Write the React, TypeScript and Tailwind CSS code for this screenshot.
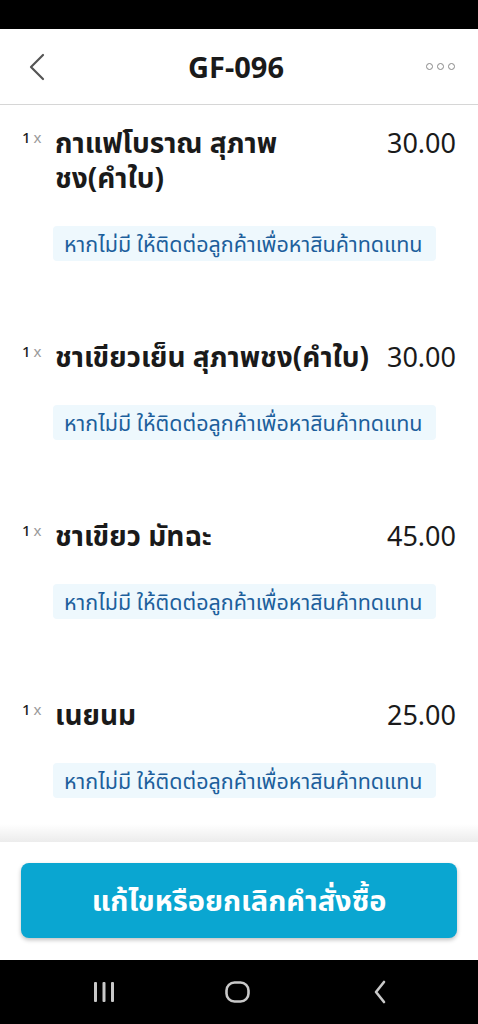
import React from 'react';

const items = [
  { qty: 1, name: 'กาแฟโบราณ สุภาพ\nชง(คำใบ)', price: '30.00' },
  { qty: 1, name: 'ชาเขียวเย็น สุภาพชง(คำใบ)', price: '30.00' },
  { qty: 1, name: 'ชาเขียว มัทฉะ', price: '45.00' },
  { qty: 1, name: 'เนยนม', price: '25.00' },
];

const font = { fontFamily: '"Noto Sans", "Noto Sans Thai", sans-serif' };

function OrderItem({ qty, name, price }: { qty: number; name: string; price: string }) {
  return (
    <div className="pl-[22px] pr-[22px] pt-[20px] pb-[58px]">
      <div className="flex items-start">
        <div className="w-[33px] shrink-0 pt-[2px] text-[15px] leading-[20px]">
          <span className="font-medium text-[#222]">{qty}</span>
          <span className="ml-[3px] text-[#999]">x</span>
        </div>
        <div className="flex-1 whitespace-pre-line text-[28px] font-bold leading-[35px] text-[#1a1a1a]">{name}</div>
        <div className="shrink-0 pl-[6px] text-[27px] leading-[35px] text-[#1a1a1a]">{price}</div>
      </div>
      <div className="mt-[31px] ml-[31px] mr-[20px] rounded-[4px] bg-[#eef8fd] px-[11px] py-[3px] text-[21.5px] leading-[29px] text-[#1d5f9c]">
        หากไม่มี ให้ติดต่อลูกค้าเพื่อหาสินค้าทดแทน
      </div>
    </div>
  );
}

export default function App() {
  return (
    <div className="flex h-[1024px] w-[478px] flex-col overflow-hidden bg-white" style={font}>
      <div className="h-[29px] shrink-0 bg-black" />
      <header className="flex h-[76px] shrink-0 items-center justify-between border-b border-[#d6d6d6] pl-[28px] pr-[23px]">
        <svg width="18" height="28" viewBox="0 0 18 28" fill="none" stroke="#555" strokeWidth="2.2" strokeLinecap="round" strokeLinejoin="round">
          <path d="M15 2 L3 14 L15 26" />
        </svg>
        <h1 className="text-[29px] font-bold text-[#1a1a1a]">GF-096</h1>
        <div className="flex gap-[4px]">
          <span className="h-[7px] w-[7px] rounded-full border-[1.5px] border-[#888]" />
          <span className="h-[7px] w-[7px] rounded-full border-[1.5px] border-[#888]" />
          <span className="h-[7px] w-[7px] rounded-full border-[1.5px] border-[#888]" />
        </div>
      </header>
      <main className="relative flex-1 overflow-hidden">
        {items.map((it, i) => (
          <OrderItem key={i} {...it} />
        ))}
        <div className="absolute bottom-0 left-0 right-0 h-[18px] bg-gradient-to-b from-transparent to-[#ececec]" />
      </main>
      <footer className="flex h-[118px] shrink-0 items-center px-[21px] pb-[2px]">
        <button className="h-[75px] w-full rounded-[8px] bg-[#0aa6d1] text-[29px] font-bold text-white shadow-[0_2px_4px_rgba(0,0,0,0.25)]">
          แก้ไขหรือยกเลิกคำสั่งซื้อ
        </button>
      </footer>
      <nav className="flex h-[64px] shrink-0 items-center bg-black pl-[84px]">
        <div className="flex w-[40px] justify-center">
          <svg width="22" height="20" viewBox="0 0 22 20" fill="#c8c8c8">
            <rect x="1" y="0" width="3" height="20" rx="1" />
            <rect x="9.5" y="0" width="3" height="20" rx="1" />
            <rect x="18" y="0" width="3" height="20" rx="1" />
          </svg>
        </div>
        <div className="ml-[93px] flex w-[40px] justify-center">
          <svg width="25" height="22" viewBox="0 0 25 22" fill="none" stroke="#c8c8c8" strokeWidth="2.6">
            <rect x="1.5" y="1.5" width="22" height="19" rx="8" />
          </svg>
        </div>
        <div className="ml-[103px] flex w-[40px] justify-center">
          <svg width="16" height="24" viewBox="0 0 16 24" fill="none" stroke="#c8c8c8" strokeWidth="2.6" strokeLinecap="round" strokeLinejoin="round">
            <path d="M12 2 L4 12 L12 22" />
          </svg>
        </div>
      </nav>
    </div>
  );
}
